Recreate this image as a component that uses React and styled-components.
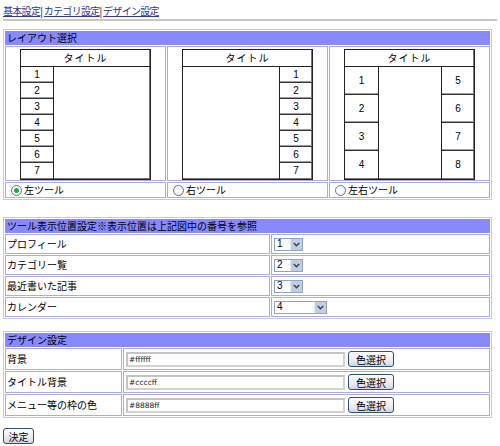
import React from "react";
import styled, { createGlobalStyle } from "styled-components";

const Global = createGlobalStyle`
  html, body { margin: 0; padding: 0; background: #ffffff; }
  body {
    font-family: "Noto Sans CJK JP", "Noto Sans", sans-serif;
    font-size: 10px;
    line-height: 12px;
    color: #000000;
  }
`;

const Page = styled.div`
  padding: 4px 3px 0;
  width: 494px;
  box-sizing: border-box;
`;

const Nav = styled.div`
  height: 13px;
  line-height: 13px;
  white-space: nowrap;
  letter-spacing: -0.7px;
`;

const NavLink = styled.a`
  color: #333399;
  text-decoration: underline;
  cursor: pointer;
`;

const Rule = styled.div`
  height: 2px;
  background: #c6c6c6;
  margin: 2px 0 8px;
  width: 494px;
`;

const Section = styled.div`
  width: 489px;
  box-sizing: border-box;
  border: 1px solid #c6c6f2;
  padding: 1px;
  display: grid;
  grid-template-columns: ${(p) => p.$cols};
  gap: 1px;
  margin-bottom: ${(p) => p.$after || 0}px;
`;

const Header = styled.div`
  grid-column: 1 / -1;
  background: #8888ff;
  height: 14px;
  line-height: 14px;
  padding-left: 2px;
  white-space: nowrap;
`;

const Cell = styled.div`
  border: 1px solid #aaaaea;
  height: ${(p) => p.$h}px;
  box-sizing: border-box;
  display: flex;
  align-items: ${(p) => (p.$top ? "flex-start" : "center")};
  justify-content: ${(p) => (p.$center ? "center" : "flex-start")};
  padding: ${(p) => p.$pad || "0"};
  white-space: nowrap;
`;

/* Layout diagrams */
const Diagram = styled.div`
  width: 131px;
  height: 131px;
  box-sizing: border-box;
  border: 1px solid #222222;
  box-shadow: inset -1px -1px 0 #777777;
  display: grid;
  grid-template-columns: ${(p) => p.$cols};
  grid-template-rows: 17px 1fr;
  font-family: "Liberation Sans", Arial, sans-serif;
`;

const DTitle = styled.div`
  grid-column: 1 / -1;
  border-bottom: 1px solid #222222;
  text-align: center;
  line-height: 16px;
  font-family: "Noto Sans CJK JP", sans-serif;
  font-size: 10px;
  letter-spacing: 1px;
`;

const DColumn = styled.div`
  display: grid;
  grid-template-rows: repeat(${(p) => p.$rows}, 1fr);
  ${(p) => (p.$side === "left" ? "border-right: 1px solid #222222;" : "")}
  ${(p) => (p.$side === "right" ? "border-left: 1px solid #222222;" : "")}
`;

const DNum = styled.div`
  display: flex;
  align-items: center;
  justify-content: center;
  font-size: 10px;
  border-bottom: 1px solid #333333;
  box-shadow: inset 0 -1px 0 #a0a0a0;
  &:last-child { border-bottom: none; box-shadow: none; }
`;

const DBody = styled.div``;

const Radio = styled.span`
  width: 11px;
  height: 11px;
  box-sizing: border-box;
  border-radius: 50%;
  border: 1px solid #4f7aa8;
  background: radial-gradient(circle at 40% 40%, #ffffff 40%, #dfe4ea 100%);
  display: inline-flex;
  align-items: center;
  justify-content: center;
  margin: 0 2px 0 1px;
  &::after {
    content: "";
    width: 5px;
    height: 5px;
    border-radius: 50%;
    background: ${(p) => (p.$checked ? "#2fa83a" : "transparent")};
  }
`;

/* Form controls */
const Select = styled.div`
  width: ${(p) => p.$w}px;
  height: 13px;
  box-sizing: border-box;
  border: 1px solid #8ea4c4;
  background: #ffffff;
  display: flex;
  align-items: center;
  justify-content: space-between;
  font-family: "Liberation Sans", Arial, sans-serif;
  font-size: 10px;
  padding-left: 2px;
`;

const SelectButton = styled.span`
  width: 11px;
  height: 11px;
  background: #c4cde0;
  border-left: 1px solid #e8ecf4;
  display: flex;
  align-items: center;
  justify-content: center;
`;

const TextBox = styled.div`
  width: 219px;
  height: 15px;
  box-sizing: border-box;
  border: 2px solid #d2d2d2;
  border-top-color: #c4c4c4;
  border-left-color: #c4c4c4;
  font-family: "DejaVu Sans", Verdana, sans-serif;
  font-size: 7.5px;
  line-height: 11px;
  padding-left: 1px;
  color: #222222;
  margin-right: 3px;
`;

const Button = styled.button`
  height: 16px;
  width: ${(p) => p.$w}px;
  padding: 0;
  box-sizing: border-box;
  border: 1px solid #2d4f78;
  border-radius: 3px;
  background: linear-gradient(#ffffff, #e6e6ee 70%, #d4d4de);
  font-family: "Noto Sans CJK JP", sans-serif;
  font-size: 10px;
  line-height: 13px;
  color: #000000;
`;

const Footer = styled.div`
  margin-top: 10px;
`;

const Chevron = () => (
  <svg width="7" height="5" viewBox="0 0 7 5">
    <path d="M0.8 1 L3.5 3.7 L6.2 1" fill="none" stroke="#33415e" strokeWidth="1.5" />
  </svg>
);

const seven = [1, 2, 3, 4, 5, 6, 7];

const tools = [
  { label: "プロフィール", value: "1", w: 29 },
  { label: "カテゴリー覧", value: "2", w: 29 },
  { label: "最近書いた記事", value: "3", w: 29 },
  { label: "カレンダー", value: "4", w: 53 },
];

const colors = [
  { label: "背景", value: "#ffffff" },
  { label: "タイトル背景", value: "#ccccff" },
  { label: "メニュー等の枠の色", value: "#8888ff" },
];

export default function App() {
  return (
    <Page>
      <Global />
      <Nav>
        <NavLink>基本設定</NavLink>| <NavLink>カテゴリ設定</NavLink>| <NavLink>デザイン設定</NavLink>
      </Nav>
      <Rule />

      <Section $cols="repeat(3, 1fr)" $after={17}>
        <Header>レイアウト選択</Header>
        <Cell $h={135} $top $center $pad="2px 0 0">
          <Diagram $cols="33px 1fr">
            <DTitle>タイトル</DTitle>
            <DColumn $rows={7} $side="left">
              {seven.map((n) => (
                <DNum key={n}>{n}</DNum>
              ))}
            </DColumn>
            <DBody />
          </Diagram>
        </Cell>
        <Cell $h={135} $top $center $pad="2px 0 0">
          <Diagram $cols="1fr 33px">
            <DTitle>タイトル</DTitle>
            <DBody />
            <DColumn $rows={7} $side="right">
              {seven.map((n) => (
                <DNum key={n}>{n}</DNum>
              ))}
            </DColumn>
          </Diagram>
        </Cell>
        <Cell $h={135} $top $center $pad="2px 0 0">
          <Diagram $cols="34px 1fr 33px">
            <DTitle>タイトル</DTitle>
            <DColumn $rows={4} $side="left">
              {[1, 2, 3, 4].map((n) => (
                <DNum key={n}>{n}</DNum>
              ))}
            </DColumn>
            <DBody />
            <DColumn $rows={4} $side="right">
              {[5, 6, 7, 8].map((n) => (
                <DNum key={n}>{n}</DNum>
              ))}
            </DColumn>
          </Diagram>
        </Cell>
        <Cell $h={16} $pad="0 0 0 4px">
          <Radio $checked />左ツール
        </Cell>
        <Cell $h={16} $pad="0 0 0 4px">
          <Radio />右ツール
        </Cell>
        <Cell $h={16} $pad="0 0 0 4px">
          <Radio />左右ツール
        </Cell>
      </Section>

      <Section $cols="265px 1fr" $after={12}>
        <Header>ツール表示位置設定※表示位置は上記図中の番号を参照</Header>
        {tools.map((t) => (
          <React.Fragment key={t.label}>
            <Cell $h={20} $pad="0 0 0 1px">{t.label}</Cell>
            <Cell $h={20} $pad="0 0 0 2px">
              <Select $w={t.w}>
                {t.value}
                <SelectButton>
                  <Chevron />
                </SelectButton>
              </Select>
            </Cell>
          </React.Fragment>
        ))}
      </Section>

      <Section $cols="117px 1fr">
        <Header>デザイン設定</Header>
        {colors.map((c) => (
          <React.Fragment key={c.label}>
            <Cell $h={22} $pad="0 0 0 1px">{c.label}</Cell>
            <Cell $h={22} $pad="0 0 0 2px">
              <TextBox>{c.value}</TextBox>
              <Button type="button" $w={46}>色選択</Button>
            </Cell>
          </React.Fragment>
        ))}
      </Section>

      <Footer>
        <Button type="button" $w={31}>決定</Button>
      </Footer>
    </Page>
  );
}
